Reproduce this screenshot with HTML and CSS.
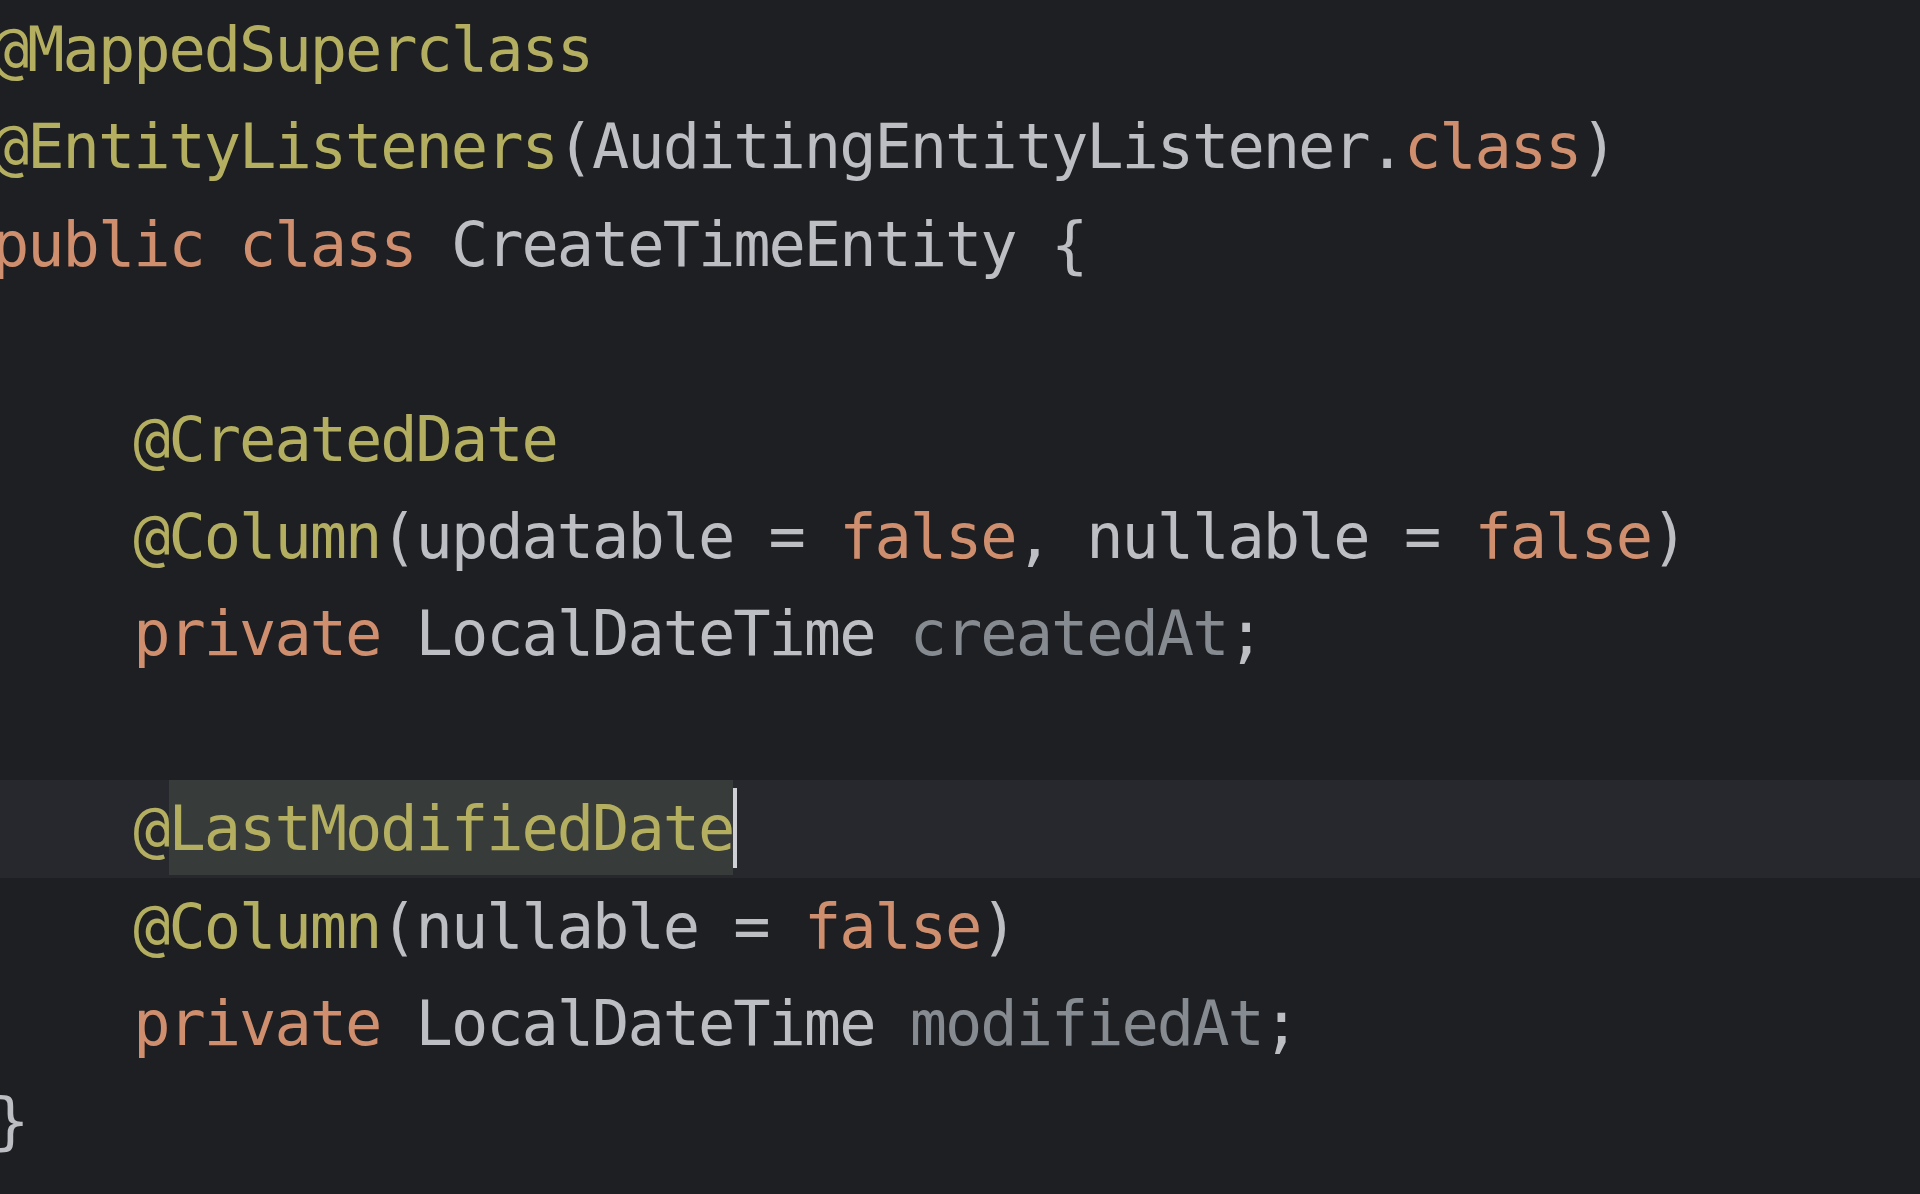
FILE: index.html
```html
<!DOCTYPE html>
<html>
<head>
<meta charset="utf-8">
<link rel="stylesheet" href="styles.css">
</head>
<body>
<div class="editor">
  <div class="line"><span class="ann">@MappedSuperclass</span></div>
  <div class="line"><span class="ann">@EntityListeners</span>(AuditingEntityListener.<span class="kw">class</span>)</div>
  <div class="line"><span class="kw">public class </span>CreateTimeEntity {</div>
  <div class="line"> </div>
  <div class="line">    <span class="ann">@CreatedDate</span></div>
  <div class="line">    <span class="ann">@Column</span>(updatable = <span class="kw">false</span>, nullable = <span class="kw">false</span>)</div>
  <div class="line">    <span class="kw">private </span>LocalDateTime <span class="unused">createdAt</span>;</div>
  <div class="line"> </div>
  <div class="line current">    <span class="ann">@<span class="under-caret">LastModifiedDate</span></span><span class="caret"></span></div>
  <div class="line">    <span class="ann">@Column</span>(nullable = <span class="kw">false</span>)</div>
  <div class="line">    <span class="kw">private </span>LocalDateTime <span class="unused">modifiedAt</span>;</div>
  <div class="line">}</div>
</div>
</body>
</html>
```
FILE: styles.css
```css
html, body {
  margin: 0;
  padding: 0;
  background: #1e1f22;
  height: 100%;
  overflow: hidden;
}
.editor {
  display: flex;
  flex-direction: column;
  padding-top: 1px;
  margin-left: -8px;
  font-family: "DejaVu Sans Mono", "Liberation Mono", monospace;
  font-size: 62px;
  letter-spacing: -2.03px;
  color: #bcbec4;
}
.line {
  display: block;
  height: 97.4px;
  line-height: 97.4px;
  white-space: pre;
}
.line.current {
  background: #26282e;
}
.ann { color: #b3ae60; }
.kw { color: #cf8e6d; }
.unused { color: #868a91; }
.under-caret {
  display: inline-block;
  vertical-align: top;
  height: 95px;
  line-height: 97.4px;
  background: #373b39;
}
.caret {
  display: inline-block;
  vertical-align: top;
  width: 4px;
  height: 80px;
  margin-top: 8px;
  background: #ced0d6;
}
```
